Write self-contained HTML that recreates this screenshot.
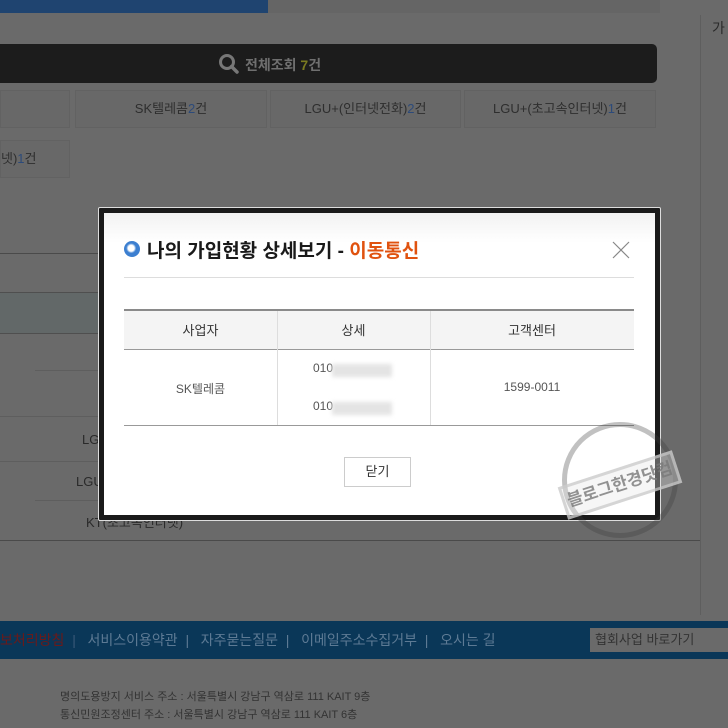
<!DOCTYPE html>
<html style="background:#6a6a6a"><head><meta charset="utf-8"><style>
*{margin:0;padding:0;box-sizing:border-box}
html,body{background:#6a6a6a}
body{width:728px;height:728px;overflow:hidden;position:relative;font-family:"Liberation Sans","Noto Sans CJK KR",sans-serif;color:#2a2a2a}
.a{position:absolute}
.tab{position:absolute;top:90px;height:38px;border:1px solid #626262;background:#686868;font-size:13px;color:#2e2e2e;text-align:center;line-height:36px}
.hl{position:absolute;height:1px;background:#4f4f4f}
</style></head><body>
<div class="a" style="left:0;top:0;width:728px;height:728px;background:#6a6a6a"></div>
<div class="a" style="left:0;top:0;width:268px;height:13px;background:#1f4470"></div>
<div class="a" style="left:268px;top:0;width:392px;height:13px;background:#656565"></div>
<div class="a" style="left:700px;top:15px;width:1px;height:600px;background:#5e5e5e"></div>
<div class="a" style="left:712px;top:18px;font-size:14px;color:#2a2a2a">가</div>
<div class="a" style="left:0;top:44px;width:657px;height:39px;background:#1c1c1c;border-radius:0 5px 5px 0"></div>
<svg class="a" style="left:217px;top:52px" width="24" height="24" viewBox="0 0 24 24"><circle cx="10" cy="10" r="6.5" fill="none" stroke="#777" stroke-width="3"/><path d="M14.5 14.5L20 20" stroke="#777" stroke-width="3.5" stroke-linecap="round"/></svg>
<div class="a" style="left:245px;top:55px;font-size:14px;color:#6f6f6f;font-weight:bold">전체조회 <span style="color:#7a7a20">7</span>건</div>
<div class="tab" style="left:0;width:70px"></div>
<div class="tab" style="left:75px;width:192px">SK텔레콤<span style="color:#2c4a7a">2</span>건</div>
<div class="tab" style="left:270px;width:191px">LGU+(인터넷전화)<span style="color:#2c4a7a">2</span>건</div>
<div class="tab" style="left:464px;width:192px">LGU+(초고속인터넷)<span style="color:#2c4a7a">1</span>건</div>
<div class="tab" style="left:0;top:140px;width:70px;text-align:left">넷)<span style="color:#2c4a7a">1</span>건</div>
<div class="hl" style="left:0;top:253px;width:100px;background:#4a4a4a"></div>
<div class="a" style="left:0;top:293px;width:100px;height:40px;background:#626868"></div>
<div class="hl" style="left:0;top:292px;width:100px"></div>
<div class="hl" style="left:0;top:333px;width:100px"></div>
<div class="hl" style="left:35px;top:370px;width:65px;background:#5e5e5e"></div>
<div class="hl" style="left:0;top:416px;width:100px;background:#5e5e5e"></div>
<div class="a" style="left:82px;top:432px;font-size:13px">LG</div>
<div class="hl" style="left:0;top:461px;width:100px;background:#5e5e5e"></div>
<div class="a" style="left:76px;top:474px;font-size:13px">LGU</div>
<div class="hl" style="left:35px;top:500px;width:65px;background:#5e5e5e"></div>
<div class="a" style="left:86px;top:512px;font-size:13px">KT(초고속인터넷)</div>
<div class="hl" style="left:0;top:540px;width:700px;background:#4a4a4a"></div>
<div class="a" style="left:0;top:621px;width:728px;height:38px;background:#0a3758"></div>
<div class="a" style="left:0;top:630px;font-size:14px;color:#6a1a1a;white-space:nowrap">보처리방침 &nbsp;<span style="color:#3a5a78">|</span>&nbsp;&nbsp; <span style="color:#5d7a94">서비스이용약관 &nbsp;|&nbsp;&nbsp; 자주묻는질문 &nbsp;|&nbsp;&nbsp; 이메일주소수집거부 &nbsp;|&nbsp;&nbsp; 오시는 길</span></div>
<div class="a" style="left:590px;top:628px;width:138px;height:24px;background:#6a6a6a;font-size:13px;line-height:24px;padding-left:5px;color:#333">협회사업 바로가기</div>
<div class="a" style="left:60px;top:688px;font-size:11px;color:#333;line-height:18px">명의도용방지 서비스 주소 : 서울특별시 강남구 역삼로 111 KAIT 9층<br>통신민원조정센터 주소 : 서울특별시 강남구 역삼로 111 KAIT 6층</div>

<div class="a" style="left:98px;top:207px;width:563px;height:314px;background:#1a1a1a;border:1px solid #ddd;border-radius:2px"></div>
<div class="a" style="left:104px;top:213px;width:551px;height:302px;background:linear-gradient(#f2f2f2,#fff 30px)"></div>
<div class="a" style="left:124px;top:241px;width:16px;height:16px;border-radius:50%;background:radial-gradient(circle at 45% 45%,#fff 0 3px,#3c7fd0 5px)"></div>
<div class="a" style="left:147px;top:236px;font-size:19px;font-weight:bold;color:#1a1a1a;white-space:nowrap">나의 가입현황 상세보기 - <span style="color:#e0520f">이동통신</span></div>
<svg class="a" style="left:612px;top:241px" width="18" height="18"><path d="M1 1L17 17M17 1L1 17" stroke="#888" stroke-width="1.2"/></svg>
<div class="a" style="left:124px;top:277px;width:510px;height:1px;background:#ddd"></div>
<div class="a" style="left:124px;top:309px;width:510px;height:2px;background:#8a8a8a"></div>
<div class="a" style="left:124px;top:311px;width:510px;height:38px;background:#f4f4f4"></div>
<div class="a" style="left:124px;top:349px;width:510px;height:1px;background:#999"></div>
<div class="a" style="left:124px;top:425px;width:510px;height:1px;background:#999"></div>
<div class="a" style="left:277px;top:311px;width:1px;height:114px;background:#ddd"></div>
<div class="a" style="left:430px;top:311px;width:1px;height:114px;background:#ddd"></div>
<div class="a" style="left:124px;top:320px;width:153px;text-align:center;font-size:13px;color:#333">사업자</div>
<div class="a" style="left:277px;top:320px;width:153px;text-align:center;font-size:13px;color:#333">상세</div>
<div class="a" style="left:430px;top:320px;width:204px;text-align:center;font-size:13px;color:#333">고객센터</div>
<div class="a" style="left:124px;top:380px;width:153px;text-align:center;font-size:12px;color:#555">SK텔레콤</div>
<div class="a" style="left:313px;top:361px;font-size:12px;color:#555">010</div>
<div class="a" style="left:332px;top:364px;width:60px;height:13px;background:#e4e4e4;filter:blur(2px)"></div>
<div class="a" style="left:313px;top:399px;font-size:12px;color:#555">010</div>
<div class="a" style="left:332px;top:402px;width:60px;height:13px;background:#e4e4e4;filter:blur(2px)"></div>
<div class="a" style="left:430px;top:380px;width:204px;text-align:center;font-size:12px;color:#555">1599-0011</div>
<div class="a" style="left:344px;top:457px;width:67px;height:30px;border:1px solid #ccc;background:#fff;text-align:center;line-height:28px;font-size:13px;color:#333">닫기</div>

<div class="a" style="left:562px;top:422px;width:116px;height:116px;border-radius:50%;border:5px solid rgba(60,60,60,.45);opacity:.7"></div>
<div class="a" style="left:560px;top:468px;width:120px;height:34px;border:3px solid rgba(200,200,200,.7);background:rgba(230,230,230,.35);transform:rotate(-18deg);font-size:17px;font-weight:bold;color:rgba(120,120,120,.8);text-align:center;line-height:28px">블로그한경닷컴</div>
</body></html>
